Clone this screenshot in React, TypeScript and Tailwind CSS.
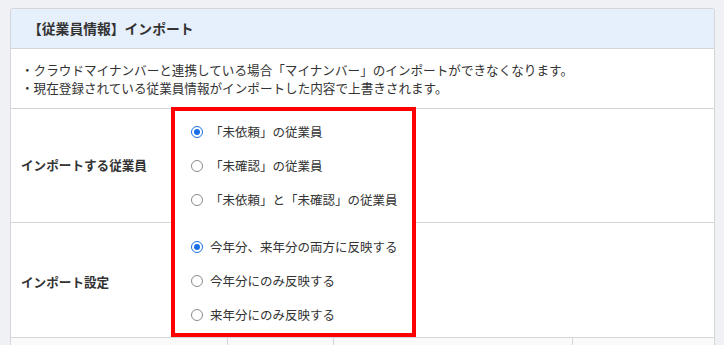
import React from "react";

const font = { fontFamily: '"Noto Sans CJK JP", "Noto Sans", sans-serif' };

function Radio({ checked, label }: { checked?: boolean; label: string }) {
  return (
    <div className="flex h-[34px] items-center pl-[16px]">
      {checked ? (
        <span className="flex h-[12px] w-[12px] items-center justify-center rounded-full border-[1.5px] border-[#1a6fe6] bg-white">
          <span className="h-[6px] w-[6px] rounded-full bg-[#1a6fe6]" />
        </span>
      ) : (
        <span className="h-[12px] w-[12px] rounded-full border border-[#8a8a8f] bg-white" />
      )}
      <span className="ml-[7px] text-[12.5px] leading-[18px] text-[#333]">{label}</span>
    </div>
  );
}

export default function App() {
  return (
    <div className="min-h-[345px] w-[724px] overflow-hidden bg-[#f0f1f5] pt-[8px]" style={font}>
      <div className="ml-[10px] w-[705px] rounded-t-[3px] border border-b-0 border-[#d6d6da] bg-white">
        <div className="flex h-[40px] items-center rounded-t-[3px] border-b border-[#d6d6da] bg-[#e6f0fc] pl-[17px] text-[13.8px] font-bold text-[#333]">
          【従業員情報】インポート
        </div>
        <div className="border-b border-[#d6d6da] px-[10px] pb-[11px] pt-[12px] text-[12.6px] leading-[18px] text-[#333]">
          <p>・クラウドマイナンバーと連携している場合「マイナンバー」のインポートができなくなります。</p>
          <p>・現在登録されている従業員情報がインポートした内容で上書きされます。</p>
        </div>
        <div className="flex items-start border-b border-[#d6d6da]">
          <div className="w-[160px]">
            <div className="flex h-[114px] items-center border-b border-[#d6d6da] pl-[10px] text-[12.6px] font-bold text-[#333]">
              インポートする従業員
            </div>
            <div className="flex h-[114px] items-center pl-[10px] pt-[4px] text-[12.6px] font-bold text-[#333]">
              インポート設定
            </div>
          </div>
          <div className="-mt-[2px] h-[230px] w-[245px] border-[4px] border-[#ff0000] bg-white pt-[4px]">
            <Radio checked label="「未依頼」の従業員" />
            <Radio label="「未確認」の従業員" />
            <Radio label="「未依頼」と「未確認」の従業員" />
            <div className="h-[13px]" />
            <Radio checked label="今年分、来年分の両方に反映する" />
            <Radio label="今年分にのみ反映する" />
            <Radio label="来年分にのみ反映する" />
          </div>
          <div className="flex-1">
            <div className="h-[114px] border-b border-[#d6d6da]" />
            <div className="h-[114px]" />
          </div>
        </div>
        <div className="flex h-[20px] bg-[#fafafa]">
          <div className="w-[217px] border-r border-[#d6d6da]" />
          <div className="w-[106px] border-r border-[#d6d6da]" />
          <div className="w-[239px] border-r border-[#d6d6da]" />
          <div className="flex-1" />
        </div>
      </div>
    </div>
  );
}
